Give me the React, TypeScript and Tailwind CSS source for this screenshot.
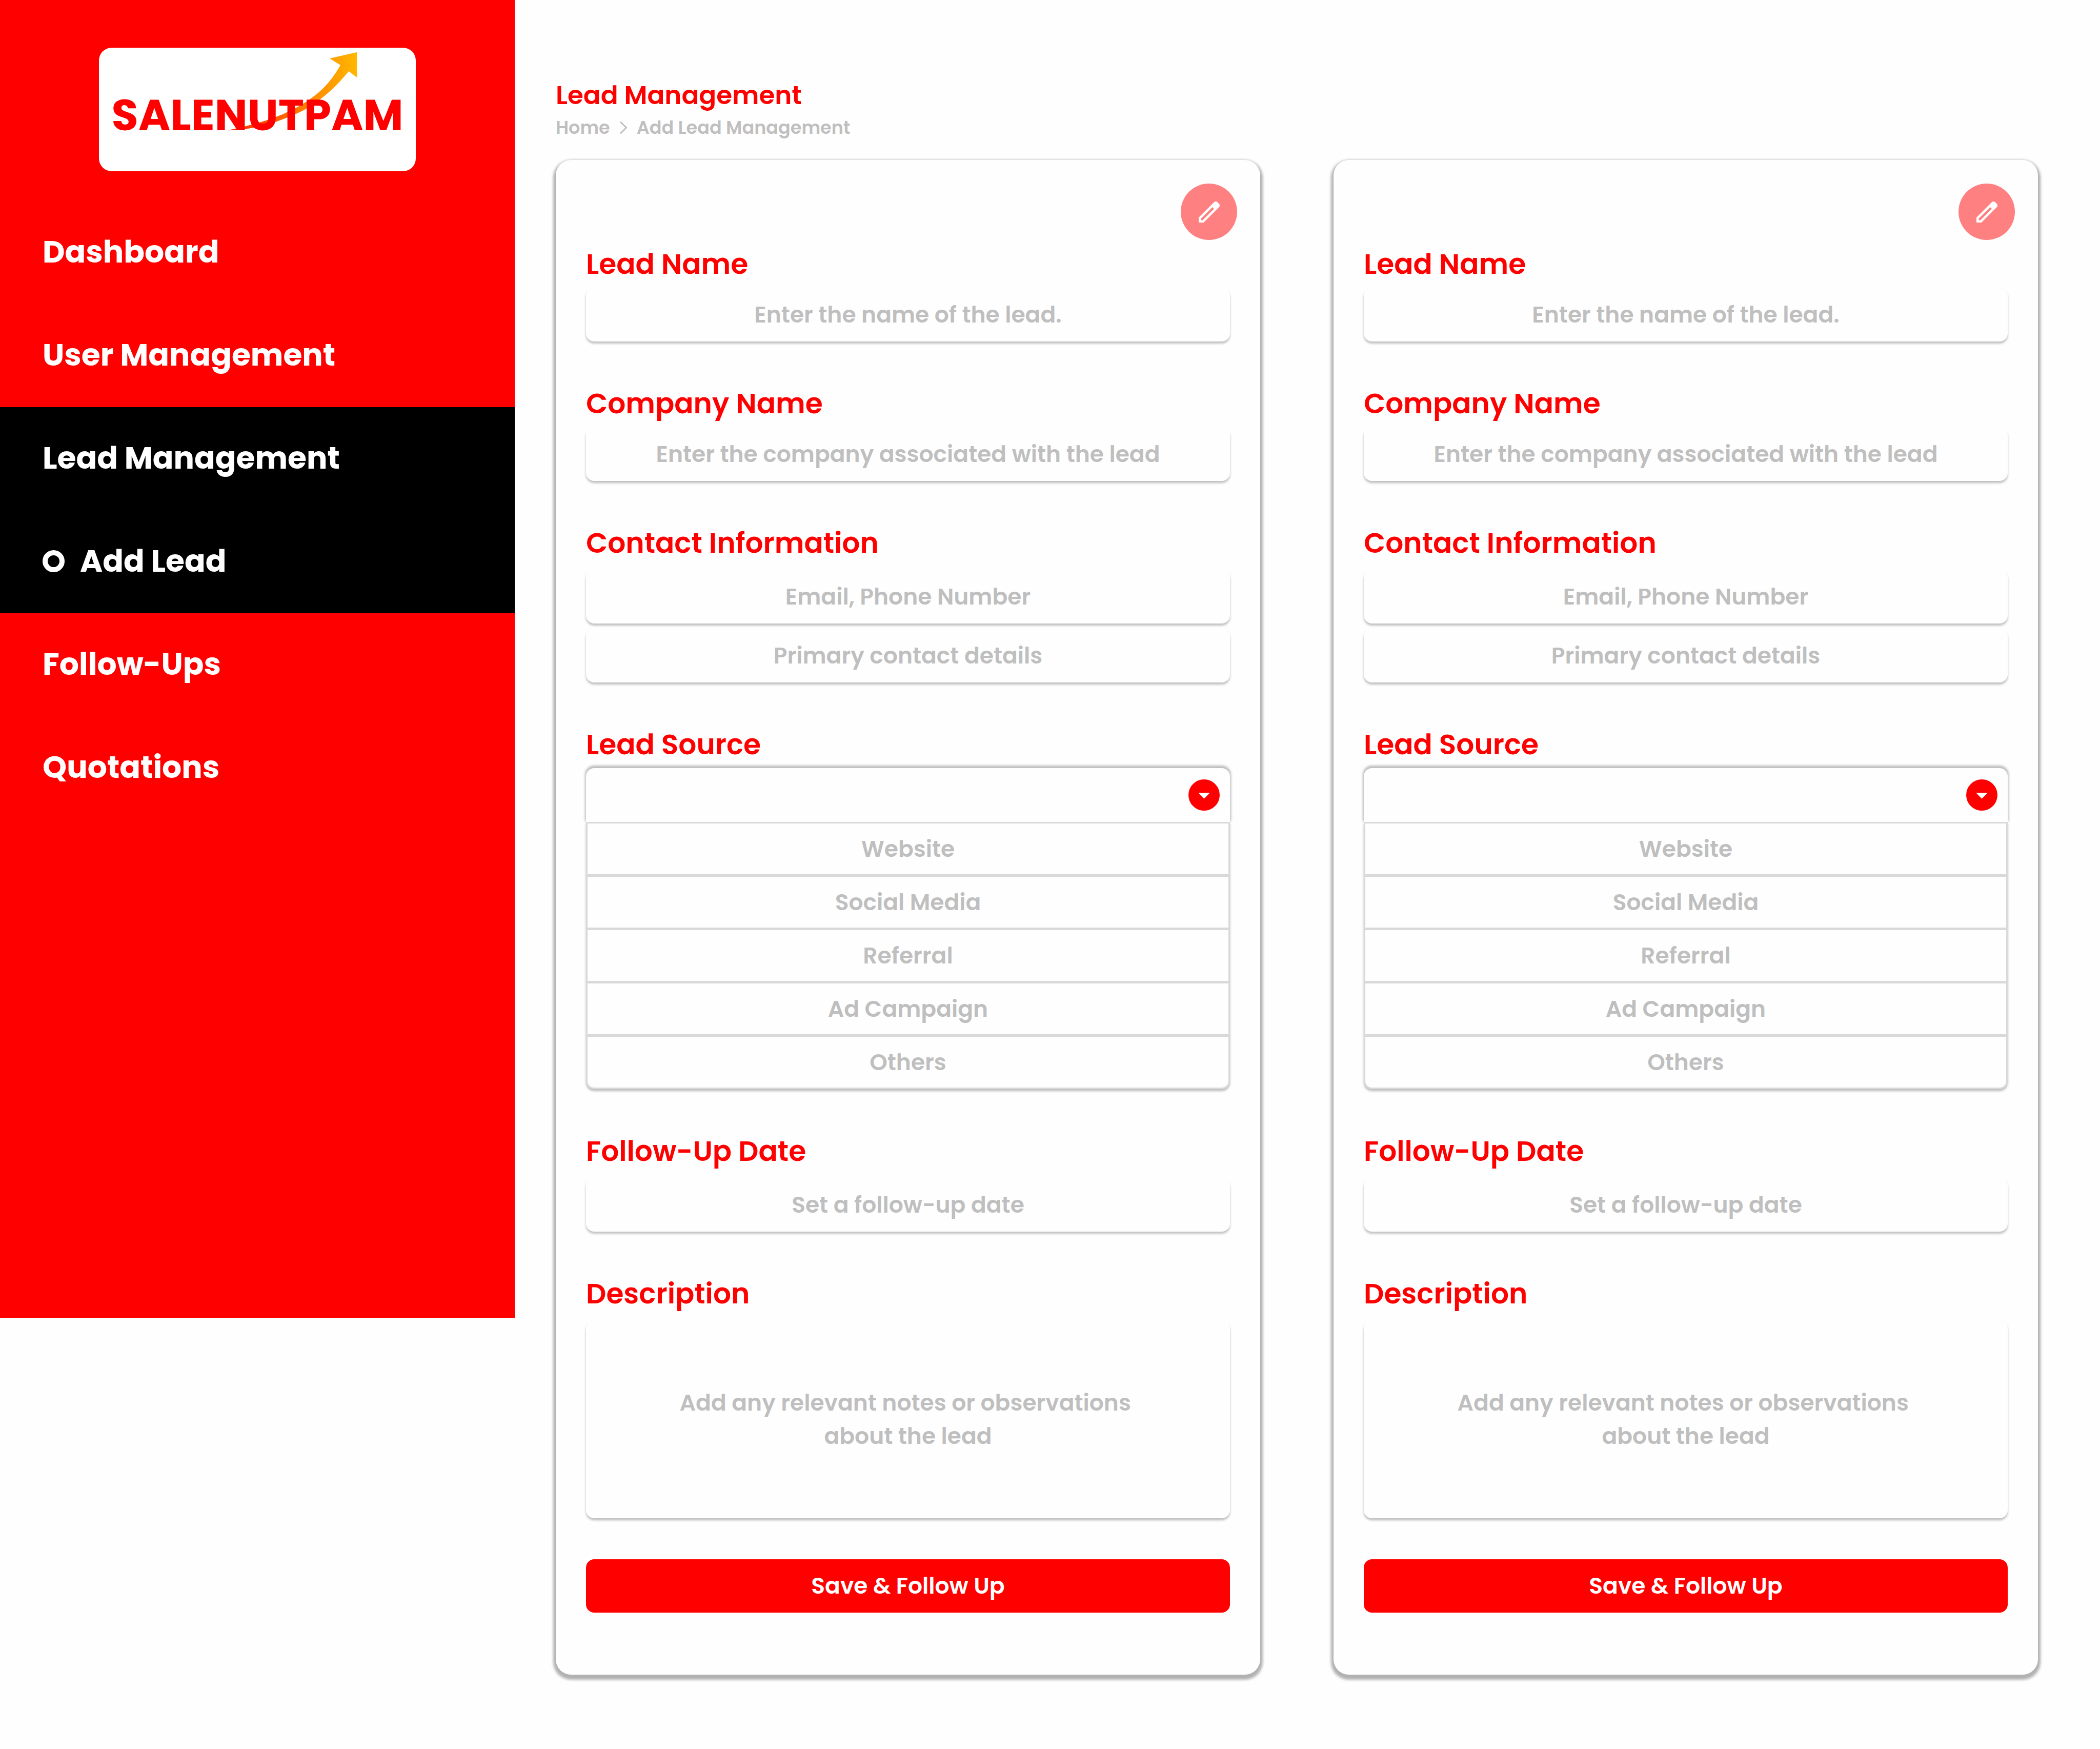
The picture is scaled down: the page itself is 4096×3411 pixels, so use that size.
import React, { useId, useState } from "react";
import type { ReactNode } from "react";

const NAV_ITEMS = [
  { label: "Dashboard" },
  { label: "User Management" },
  { label: "Lead Management", active: true },
  { label: "Add Lead", active: true, nested: true },
  { label: "Follow-Ups" },
  { label: "Quotations" },
];

const SOURCES = ["Website", "Social Media", "Referral", "Ad Campaign", "Others"];

const BOX =
  "block w-full rounded-2xl bg-[#fefefe] text-center text-[44px] font-semibold text-black shadow-[0_4px_4px_rgba(0,0,0,0.25)] outline-none placeholder:text-[#bfbfbf] placeholder:opacity-100";

function Logo() {
  return (
    <div className="relative mx-auto flex h-[241px] w-[618px] items-center justify-center rounded-[25px] bg-white pt-[21px]">
      <svg
        className="absolute inset-0 h-full w-full"
        viewBox="230.6 111 738.4 288"
        preserveAspectRatio="none"
        aria-hidden="true"
      >
        <defs>
          <linearGradient id="arrow" x1="530" y1="0" x2="832" y2="0" gradientUnits="userSpaceOnUse">
            <stop offset="0" stopColor="#ff2a00" />
            <stop offset="0.35" stopColor="#ff5500" />
            <stop offset="0.7" stopColor="#ff9000" />
            <stop offset="1" stopColor="#ffb800" />
          </linearGradient>
        </defs>
        <path
          d="M832 121.5 L832 180.7 L812.8 166 C796 186 775 210 746 231.5 C722 251 694 266 644 283.5 C610 295 572 302.5 530.6 303.7 C575 294 630 281 674.5 259 C693 250 706 242 720 232.5 C757 208 777 180 793.4 151.7 L768.4 136 Z"
          fill="url(#arrow)"
        />
      </svg>
      <span className="relative text-[85px] leading-none font-bold text-[#ff0000]">SALENUTPAM</span>
    </div>
  );
}

function Sidebar() {
  return (
    <aside className="min-h-[2570px] w-[1004px] shrink-0 self-start bg-[#ff0000] pt-[93px]">
      <Logo />
      <nav className="mt-[58px]">
        <ul>
          {NAV_ITEMS.map((item) => (
            <li key={item.label} className={item.active ? "bg-black" : ""}>
              <a
                href="#"
                className="flex h-[201px] items-center gap-[30px] pb-[3px] pl-[83px] text-[60px] leading-none font-bold text-white"
              >
                {item.nested && <span className="size-[43px] rounded-full border-[10px] border-white" />}
                {item.label}
              </a>
            </li>
          ))}
        </ul>
      </nav>
    </aside>
  );
}

function Field({ id, label, loose, children }: { id: string; label: string; loose?: boolean; children: ReactNode }) {
  return (
    <div className="flex flex-col">
      <label
        htmlFor={id}
        className={`text-[55px] leading-[56px] font-semibold text-[#ff0000] ${loose ? "mb-6" : "mb-[18px]"}`}
      >
        {label}
      </label>
      {children}
    </div>
  );
}

function SourcePicker({ id }: { id: string }) {
  const [value, setValue] = useState("");
  return (
    <div>
      <div className="relative">
        <select
          id={id}
          value={value}
          onChange={(e) => setValue(e.target.value)}
          className="block h-[105px] w-full appearance-none rounded-t-2xl bg-[#fefefe] px-[100px] text-center text-[44px] font-semibold shadow-[0_-3px_4px_2px_rgba(0,0,0,0.25)] outline-none"
        >
          <option value="" />
          {SOURCES.map((s) => (
            <option key={s}>{s}</option>
          ))}
        </select>
        <svg
          className="pointer-events-none absolute top-[22px] right-[20px] size-[61px]"
          viewBox="0 0 218 218"
          aria-hidden="true"
        >
          <circle cx="109" cy="109" r="109" fill="#ff0000" />
          <path d="M68 93 H150 L109 135 Z" fill="#fff" />
        </svg>
      </div>
      <ul className="relative divide-y-[5px] divide-[#d9d9d9] rounded-b-2xl border-[3px] border-[#d9d9d9] bg-[#fefefe] shadow-[0_4px_4px_rgba(0,0,0,0.25)]">
        {SOURCES.map((s) => (
          <li key={s}>
            <button
              type="button"
              onClick={() => setValue(s)}
              className="block h-[99px] w-full text-center text-[44px] leading-none font-semibold text-[#bfbfbf]"
            >
              {s}
            </button>
          </li>
        ))}
      </ul>
    </div>
  );
}

function LeadCard() {
  const id = useId();
  return (
    <section className="rounded-[30px] bg-[#fefefe] pt-[46px] pb-[121px] shadow-[0_5px_5px_5px_rgba(0,0,0,0.3)]">
      <div className="flex justify-end px-[45px]">
        <button
          type="button"
          aria-label="Edit lead"
          className="flex size-[110px] items-center justify-center rounded-full bg-[#ff8080] text-white"
        >
          <svg className="size-[41px]" viewBox="3 3 18 18" fill="currentColor" aria-hidden="true">
            <path d="M5 19h1.425L16.2 9.225 14.775 7.8 5 17.575V19Zm-2 2v-4.25L16.2 3.575q.3-.275.663-.425t.762-.15q.4 0 .775.15t.65.45L20.425 5q.3.275.438.65T21 6.4q0 .4-.137.763t-.438.662L7.25 21H3Z" />
          </svg>
        </button>
      </div>
      <form className="mt-[19px] flex flex-col gap-[93px] px-[59px]" onSubmit={(e) => e.preventDefault()}>
        <Field id={`${id}-name`} label="Lead Name">
          <input id={`${id}-name`} type="text" className={`${BOX} h-[105px]`} placeholder="Enter the name of the lead." />
        </Field>
        <Field id={`${id}-company`} label="Company Name">
          <input
            id={`${id}-company`}
            type="text"
            className={`${BOX} h-[105px]`}
            placeholder="Enter the company associated with the lead"
          />
        </Field>
        <Field id={`${id}-contact`} label="Contact Information" loose>
          <div className="flex flex-col gap-2.5">
            <input id={`${id}-contact`} type="text" className={`${BOX} h-[105px]`} placeholder="Email, Phone Number" />
            <input
              type="text"
              aria-label="Primary contact details"
              className={`${BOX} h-[105px]`}
              placeholder="Primary contact details"
            />
          </div>
        </Field>
        <Field id={`${id}-source`} label="Lead Source">
          <SourcePicker id={`${id}-source`} />
        </Field>
        <Field id={`${id}-date`} label="Follow-Up Date" loose>
          <input id={`${id}-date`} type="text" className={`${BOX} h-[105px]`} placeholder="Set a follow-up date" />
        </Field>
        <div className="flex flex-col gap-20">
          <Field id={`${id}-notes`} label="Description" loose>
            <textarea
              id={`${id}-notes`}
              className={`${BOX} h-[386px] resize-none px-[140px] pt-[128px] leading-[65px]`}
              placeholder={"Add any relevant notes or observations \nabout the lead"}
            />
          </Field>
          <button
            type="submit"
            className="h-[104px] w-full rounded-2xl bg-[#ff0000] text-[44px] leading-none font-semibold text-white"
          >
            Save &amp; Follow Up
          </button>
        </div>
      </form>
    </section>
  );
}

export default function App() {
  return (
    <div className="flex min-h-screen bg-[#fefefe] font-['Poppins','Inter',sans-serif]">
      <Sidebar />
      <main className="min-w-0 flex-1 pt-[156px] pr-[121px] pb-[146px] pl-20">
        <h1 className="text-[50px] leading-[60px] font-semibold text-[#ff0000]">Lead Management</h1>
        <nav
          aria-label="Breadcrumb"
          className="mt-[11px] flex items-center gap-[18px] text-[35px] leading-[44px] font-semibold text-[#bfbfbf]"
        >
          <a href="#">Home</a>
          <svg className="h-[26px] w-[16px]" viewBox="0 0 16 26" fill="none" stroke="currentColor" strokeWidth="3" aria-hidden="true">
            <path d="M2 1.5 L13.5 13 L2 24.5" />
          </svg>
          <a href="#">Add Lead Management</a>
        </nav>
        <div className="mt-[41px] grid grid-cols-2 gap-[143px]">
          <LeadCard />
          <LeadCard />
        </div>
      </main>
    </div>
  );
}
